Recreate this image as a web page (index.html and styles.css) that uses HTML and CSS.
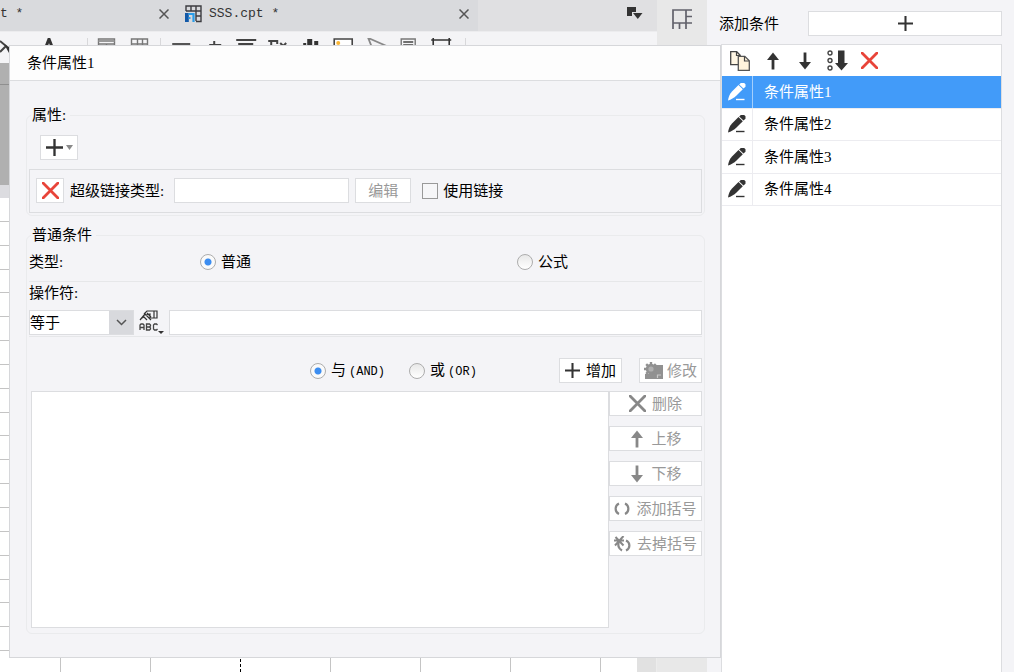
FILE: index.html
```html
<!DOCTYPE html>
<html lang="zh-CN">
<head>
<meta charset="utf-8">
<title>条件属性</title>
<link rel="stylesheet" href="styles.css">
</head>
<body>
<svg class="defs" aria-hidden="true">
  <symbol id="i-plus" viewBox="0 0 16 16"><path d="M8 0v16M0 8h16" stroke="currentColor" stroke-width="2.2"/></symbol>
  <symbol id="i-x" viewBox="0 0 16 16"><path d="M1 1l14 14M15 1L1 15" stroke="currentColor" stroke-width="2.6" stroke-linecap="round"/></symbol>
  <symbol id="i-close" viewBox="0 0 10 10"><path d="M0.5 0.5l9 9M9.5 0.5l-9 9" stroke="currentColor" stroke-width="1.5"/></symbol>
  <symbol id="i-up" viewBox="0 0 16 18"><path d="M6.600 6h2.800v11.5H6.600z" fill="currentColor"/><path d="M8 0.5L14 8H2z" fill="currentColor"/></symbol>
  <symbol id="i-down" viewBox="0 0 16 18"><path d="M6.600 0.5h2.800V12H6.600z" fill="currentColor"/><path d="M8 17.5L14 10H2z" fill="currentColor"/></symbol>
  <symbol id="i-pen" viewBox="0 0 18 18"><path d="M0 17.500C.5 14 1.500 11 4 8.500L10.500 2l4.300 4.200L8.500 12.500C6 15 3 16.500 0 17.500z" fill="currentColor"/><path d="M11.200 1.400L12.800 0h3.400l1.300 1.300v2.400l-2 1.900z" fill="currentColor"/><path d="M8 16.500h8.500" stroke="currentColor" stroke-width="1.400"/></symbol>
</svg>
<div class="app">
  <main class="workspace">
    <div class="editor">
      <nav class="tabs">
        <div class="tab"><span class="tab-name">t *</span><button class="plain tab-close" aria-label="关闭"><svg width="10" height="10"><use href="#i-close"/></svg></button></div>
        <div class="tab tab-wide">
          <svg width="17" height="18" viewBox="0 0 17 18"><path d="M1 6V1h15v15.500h-5M1 6h15M6 1v5M11 1v15M11 11h5" fill="none" stroke="#3c3c40" stroke-width="1.400"/><path d="M0 8h3.800v9H0z" fill="#1259a8"/><path d="M3.500 9h5v8M3.500 13h2" fill="none" stroke="#2a9de8" stroke-width="2.200"/></svg>
          <span class="tab-name">SSS.cpt *</span><button class="plain tab-close" aria-label="关闭"><svg width="10" height="10"><use href="#i-close"/></svg></button>
        </div>
        <button class="plain tab-menu" aria-label="标签列表"><svg width="16" height="13" viewBox="0 0 16 13"><path d="M0 0h9v5H5v4H0z" fill="#333"/><path d="M6 6h9.500l-4.700 6z" fill="#333"/></svg></button>
      </nav>
      <div class="toolbar">
        <svg class="bucket" width="10" height="16" viewBox="0 0 10 16"><path d="M0 3l6 5-6 6" fill="none" stroke="#444" stroke-width="2"/><path d="M4 6l5 3v6z" fill="#333"/></svg>
        <svg class="letter" width="14" height="16" viewBox="0 0 14 16"><path d="M2 14L7 1l5 13M4 9h6" fill="none" stroke="#333" stroke-width="3"/></svg>
        <span class="sep"></span>
        <div class="tools tools-small">
          <svg width="18" height="16" viewBox="0 0 18 16"><path d="M1 1h16v14H1zM1 6h16M9 6v9" fill="none" stroke="#777" stroke-width="1.400"/><path d="M1 2h16v2H1z" fill="#999"/></svg>
          <svg width="18" height="16" viewBox="0 0 18 16"><path d="M1 1h16v14H1zM1 6h16M7 1v14M12 1v14" fill="none" stroke="#777" stroke-width="1.400"/></svg>
        </div>
        <span class="sep"></span>
        <div class="tools">
          <svg width="18" height="16" viewBox="0 0 18 16"><path d="M0 6h18" stroke="#555" stroke-width="2"/></svg>
          <svg width="18" height="16" viewBox="0 0 18 16"><path d="M10 3v10M5 7h12" stroke="#444" stroke-width="2"/></svg>
          <svg width="20" height="16" viewBox="0 0 20 16"><path d="M0 2h20M2 6h15M0 10h20" stroke="#444" stroke-width="2"/></svg>
          <svg width="20" height="16" viewBox="0 0 20 16"><path d="M3 14V3M0 3h9v3M12 5l6 6M18 5l-6 6" fill="none" stroke="#444" stroke-width="2"/></svg>
          <svg width="16" height="16" viewBox="0 0 16 16"><path d="M4 1h5v14H4zM11 3h4v12h-4zM0 5h3v10H0z" fill="#333"/></svg>
          <svg width="20" height="16" viewBox="0 0 20 16"><path d="M1 1h18v14H1z" fill="#fff" stroke="#444" stroke-width="1.600"/><circle cx="5" cy="5" r="2" fill="#fbb634"/></svg>
          <svg width="18" height="16" viewBox="0 0 18 16"><path d="M1 0l16 7-8 2-2 6z" fill="none" stroke="#888" stroke-width="1.800"/></svg>
          <svg width="16" height="16" viewBox="0 0 16 16"><path d="M1 1h14v14H1z" fill="none" stroke="#777" stroke-width="1.400"/><path d="M3 4h10M3 7h10" stroke="#444" stroke-width="1.600"/></svg>
          <svg width="20" height="16" viewBox="0 0 20 16"><path d="M0 2h20M2 0v16M18 0v16" stroke="#333" stroke-width="1.600"/></svg>
        </div>
        <span class="sep"></span>
      </div>
      <div class="sheet-head"></div>
      <div class="sheet-band"></div>
      <div class="sheet">
        <div class="sheet-grid">
          <div class="rows"><i></i><i></i><i></i><i></i><i></i><i></i><i></i><i></i><i></i><i></i><i></i><i></i><i></i><i></i><i></i><i></i><i></i><i></i><i></i></div>
          <div class="cols"><i></i><i></i><i class="page-break"></i><i></i><i></i><i></i><i></i></div>
        </div>
        <div class="scroll"></div>
      </div>
    </div>
    <aside class="rail"><button class="plain" aria-label="单元格属性"><svg width="20" height="20" viewBox="0 0 20 20"><path d="M1 20V1h19M1 14h19M14 1v19M14 7.500h6M7.500 14v6" fill="none" stroke="#62626b" stroke-width="1.700"/></svg></button></aside>

    <section class="dialog">
      <h1 class="dialog-title">条件属性1</h1>
      <div class="dialog-body">
        <fieldset class="group">
          <legend>属性:</legend>
          <button class="btn add-attr" aria-label="添加属性"><svg width="17" height="17"><use href="#i-plus"/></svg><svg width="7" height="5" viewBox="0 0 7 5"><path d="M0 0h7L3.500 5z" fill="#8a8a8a"/></svg></button>
          <div class="link-row">
            <button class="btn remove" aria-label="删除属性"><svg width="17" height="17"><use href="#i-x"/></svg></button>
            <label for="link-type">超级链接类型:</label>
            <input class="field link-type" id="link-type" type="text">
            <button class="btn edit" disabled>编辑</button>
            <label class="choice"><input class="check" type="checkbox">使用链接</label>
          </div>
        </fieldset>

        <fieldset class="group conditions">
          <legend>普通条件</legend>
          <div class="type-row">
            <span class="type-label">类型:</span>
            <label class="choice"><input class="radio" type="radio" name="kind" checked>普通</label>
            <label class="choice"><input class="radio" type="radio" name="kind">公式</label>
          </div>
          <label class="op-label" for="operator">操作符:</label>
          <div class="op-row">
            <div class="combo">
              <select id="operator"><option>等于</option></select>
              <span class="combo-arrow"><svg width="11" height="7" viewBox="0 0 11 7"><path d="M1 1l4.500 4.500L10 1" fill="none" stroke="#555" stroke-width="1.500"/></svg></span>
            </div>
            <button class="plain value-type" aria-label="字符串"><svg width="25" height="25" viewBox="0 0 25 25"><path d="M11.500 1H18v7h-6.500M15 1v7M11.500 1H8L5 4M1 10l5-6 6 6M3 8l2-1 3 3M6 5l5-1v4M8 3l4 4" fill="none" stroke="#333" stroke-width="1.200"/><path d="M1 20v-5l1-1h2l1 1v5M1 17.500h4M7.500 14v6h3l1-1v-1l-1-1 1-1v-1l-1-1zM7.500 17h3M18.500 15l-1-1h-2l-1 1v4l1 1h2l1-1" fill="none" stroke="#444" stroke-width="1.300"/><path d="M19 21h6l-3 3z" fill="#333"/></svg></button>
            <input class="field value" type="text" aria-label="值">
          </div>
          <div class="logic-row">
            <label class="choice"><input class="radio" type="radio" name="logic" checked><span>与<span class="latin">(AND)</span></span></label>
            <label class="choice"><input class="radio" type="radio" name="logic"><span>或<span class="latin">(OR)</span></span></label>
            <div class="logic-actions">
              <button class="btn action"><svg width="15" height="15"><use href="#i-plus"/></svg>增加</button>
              <button class="btn action" disabled><svg width="19" height="18" viewBox="0 0 19 18"><path d="M9 3h10v14H1v-5h8z" fill="#919191"/><circle cx="7" cy="7" r="5.200" fill="#919191"/><path d="M7 0v14M0 7h14M2.200 2.200l9.600 9.600M11.800 2.200l-9.600 9.600" stroke="#919191" stroke-width="2.400"/><circle cx="7" cy="7" r="2.600" fill="#b0b0b0"/><path d="M13.500 16v-3h3.500" fill="none" stroke="#c8c8c8" stroke-width="1.200"/></svg>修改</button>
            </div>
          </div>
          <div class="list-area">
            <div class="cond-list" role="listbox" aria-label="条件列表" tabindex="0"></div>
            <div class="cond-actions">
              <button class="btn" disabled><svg width="17" height="17"><use href="#i-x"/></svg>删除</button>
              <button class="btn" disabled><svg width="16" height="18"><use href="#i-up"/></svg>上移</button>
              <button class="btn" disabled><svg width="16" height="18"><use href="#i-down"/></svg>下移</button>
              <button class="btn" disabled><svg width="16" height="14" viewBox="0 0 16 14"><path d="M5 1.500C.5 3.500.5 10 5 12M11 1.500c4.500 2 4.500 8.500 0 10.500" fill="none" stroke="currentColor" stroke-width="2.200"/></svg>添加括号</button>
              <button class="btn" disabled><svg width="17" height="16" viewBox="0 0 17 16"><path d="M5 5C3.500 9 4.500 12.500 8 14.500M12 4.500c4.500 2 4.500 8 0 10" fill="none" stroke="currentColor" stroke-width="2.200"/><path d="M1.500 1l8 8.500M9.500 0L1 9.500M0 4.500h10" stroke="currentColor" stroke-width="2"/></svg>去掉括号</button>
            </div>
          </div>
        </fieldset>
      </div>
    </section>
  </main>

  <aside class="panel">
    <div class="panel-head"><span>添加条件</span><button class="btn panel-add" aria-label="添加条件"><svg width="15" height="15"><use href="#i-plus"/></svg></button></div>
    <div class="panel-box">
      <div class="panel-tools">
        <button class="plain" aria-label="复制"><svg width="20" height="20" viewBox="0 0 20 20"><path d="M.7.700h6l3.500 3.500v9.500H.700z" fill="#fff6e3" stroke="#444" stroke-width="1.300"/><path d="M8.300 5.300h6.500l4.500 4.500v9.500h-11z" fill="#fff3dc" stroke="#555" stroke-width="1.300"/><path d="M6.500 1v3.500h3.500M14.500 5.500V10H19" fill="none" stroke="#444" stroke-width="1.200"/></svg></button>
        <button class="plain" aria-label="上移"><svg width="16" height="18"><use href="#i-up"/></svg></button>
        <button class="plain" aria-label="下移"><svg width="16" height="18"><use href="#i-down"/></svg></button>
        <button class="plain" aria-label="排序"><svg width="21" height="21" viewBox="0 0 21 21"><g fill="none" stroke="#444" stroke-width="1.400"><circle cx="3" cy="3" r="2"/><circle cx="3" cy="10.500" r="2"/><circle cx="3" cy="18" r="2"/></g><path d="M11 .5h6.500V13H21l-6.500 7.500L8 13h3z" fill="#333"/></svg></button>
        <button class="plain danger" aria-label="删除"><svg width="17" height="17"><use href="#i-x"/></svg></button>
      </div>
      <ul class="items">
        <li class="selected"><button class="plain pen" aria-label="编辑"><svg width="18" height="18"><use href="#i-pen"/></svg></button><span>条件属性1</span></li>
        <li><button class="plain pen" aria-label="编辑"><svg width="18" height="18"><use href="#i-pen"/></svg></button><span>条件属性2</span></li>
        <li><button class="plain pen" aria-label="编辑"><svg width="18" height="18"><use href="#i-pen"/></svg></button><span>条件属性3</span></li>
        <li><button class="plain pen" aria-label="编辑"><svg width="18" height="18"><use href="#i-pen"/></svg></button><span>条件属性4</span></li>
      </ul>
    </div>
  </aside>
</div>
</body>
</html>
```

FILE: styles.css
```css
* { box-sizing: border-box; }

body {
  margin: 0;
  background: #f4f4f7;
  color: #000;
  font: 15px/20px "Liberation Serif", "Noto Sans CJK SC", sans-serif;
}

svg { display: block; flex: none; }
.defs { position: absolute; width: 0; height: 0; }

button, input, select { font: inherit; color: inherit; margin: 0; }
.plain { display: flex; align-items: center; justify-content: center; padding: 0; border: 0; background: none; color: #333; }

.btn {
  display: flex;
  align-items: center;
  justify-content: center;
  gap: 6px;
  height: 25px;
  padding: 0;
  border: 1px solid #dcdde0;
  background: #fff;
  color: #000;
  white-space: nowrap;
}
.btn svg { color: #333; }
.btn:disabled { color: #999; }
.btn:disabled svg { color: #888; }

.field { height: 25px; min-width: 0; padding: 0 4px; border: 1px solid #dcdde0; background: #fff; }

.app { display: flex; min-height: 100vh; }
.workspace { position: relative; display: flex; flex: 1; padding-right: 12px; }
.editor { display: flex; flex: 1; flex-direction: column; min-width: 0; background: #fff; }

/* document tabs */
.tabs { display: flex; height: 32px; background: #e0e0e2; border-bottom: 1px solid #ececee; }
.tab { display: flex; align-items: center; width: 178px; padding: 0 9px 3px 0; background: #d9dadd; }
.tab-wide { width: 300px; gap: 7px; padding-left: 7px; }
.tab-name { font: 13px/20px "Liberation Mono", monospace; color: #333; white-space: pre; }
.tab-close { margin-left: auto; color: #555; }
.tab-menu { margin: 0 14px 5px auto; }

/* toolbar */
.toolbar { display: flex; align-items: flex-start; height: 31px; padding-top: 6px; background: #f4f4f6; }
.letter { margin: 0 31px 0 32px; }
.sep { width: 1px; height: 20px; background: #d8d8da; }
.tools { display: flex; width: 292px; margin: 0 8px 0 4px; }
.tools-small { width: 66px; margin: 0 4px 0 2px; }
.tools svg { flex: 1; }

/* spreadsheet */
.sheet-head { height: 22px; background: #b0b0b0; border-bottom: 1px solid #8f8f8f; }
.sheet-band { height: 113px; background: #b0b0b0; border-bottom: 13px solid #dcdce0; }
.sheet { display: flex; flex: 1; overflow: hidden; }
.sheet-grid { display: grid; flex: 1; }
.rows, .cols { grid-area: 1 / 1; display: flex; }
.rows { flex-direction: column; padding-bottom: 21px; }
.rows i { flex: 1; border-bottom: 1px solid #c4c4c4; }
.cols i { width: 90px; border-right: 1px solid #c4c4c4; }
.cols i:first-child { width: 61px; }
.cols .page-break { border-right: 1px dashed #000; }
.scroll { width: 20px; background: #e1e1e1; border-right: 1px solid #ececec; }

.rail { width: 50px; padding-top: 9px; background: #e8e8e8; }
.rail .plain { width: 100%; }

/* floating condition editor */
.dialog {
  position: absolute;
  inset: 45px -2px 14px 9px;
  display: flex;
  flex-direction: column;
  border: 1px solid #d6d7da;
  background: #f4f4f7;
}
.dialog-title { margin: 0; padding: 7px 17px; font-size: 15px; font-weight: 400; background: #fdfdfd; border-bottom: 1px solid #dcdde0; }
.dialog-body { display: flex; flex: 1; flex-direction: column; gap: 9px; padding: 24px 15px 23px 16px; }

.group { margin: 0; padding: 10px 2px 2px; min-width: 0; border: 1px solid #eaebed; border-radius: 6px; }
.group legend { margin-left: 2px; padding: 0 4px 0 1px; }
.add-attr { width: 38px; gap: 3px; margin: 0 0 9px 11px; }
.link-row { display: flex; align-items: center; gap: 6px; padding: 8px 6px 9px; border: 1px solid #dcdde0; }
.link-row .choice { margin-left: 5px; }
.btn.remove { width: 28px; }
.btn.remove svg, .panel .danger { color: #e8443a; }
.link-type { width: 175px; margin-left: 4px; }
.edit { width: 56px; }

.choice { display: flex; align-items: center; gap: 5px; white-space: nowrap; }
.check { appearance: none; width: 16px; height: 16px; border: 1px solid #999; background: #f6f6f8; }
.radio { appearance: none; width: 16px; height: 16px; border: 1px solid #adadad; border-radius: 50%; background: linear-gradient(#e8e8e8, #fff); }
.radio:checked { background: radial-gradient(circle, #3c8df0 3px, #fafafa 4px); }

.conditions { display: flex; flex: 1; flex-direction: column; padding-top: 7px; }
.type-row { display: grid; grid-template-columns: 171px 317px auto; align-items: center; padding-bottom: 9px; border-bottom: 1px solid #e6e7e9; }
.op-label { margin: 1px 0 7px; }
.op-row { display: flex; padding-bottom: 1px; border-bottom: 1px solid #e6e7e9; }
.combo { display: grid; width: 105px; height: 25px; border: 1px solid #dcdde0; background: #fff; }
.combo select { grid-area: 1 / 1; appearance: none; padding: 0; border: 0; background: none; }
.combo-arrow { grid-area: 1 / 1; display: flex; align-items: center; justify-content: center; justify-self: end; width: 24px; background: #d8d9dd; pointer-events: none; }
.value-type { width: 35px; }
.value { flex: 1; }

.logic-row { display: flex; align-items: center; gap: 24px; padding: 21px 0 8px 281px; }
.latin { margin-left: 3px; font: 12px/20px "Liberation Mono", monospace; }
.logic-actions { display: flex; gap: 17px; margin-left: auto; }
.action { width: 63px; }
.action:disabled { gap: 4px; }

.list-area { display: flex; flex: 1; padding: 0 0 3px 2px; }
.cond-list { flex: 1; border: 1px solid #dcdde0; background: #fff; }
.cond-actions { display: flex; flex-direction: column; gap: 10px; width: 93px; }

/* condition list panel */
.panel { display: flex; flex-direction: column; width: 295px; padding: 11px 12px 0 0; }
.panel-head { display: flex; align-items: center; gap: 29px; margin-bottom: 8px; }
.panel-add { flex: 1; }
.panel-box { flex: 1; margin-left: 2px; border: 1px solid #dcdde0; border-bottom: 0; background: #fff; }
.panel-tools { display: flex; width: 162px; height: 31px; margin-left: 2px; }
.panel-tools .plain { flex: 1; }
.items { display: flex; flex-direction: column; height: 130px; margin: 0; padding: 0; list-style: none; }
.items li { display: flex; flex: 1; align-items: stretch; border-bottom: 1px solid #ececf0; }
.items li span { align-self: center; padding-left: 11px; }
.pen { width: 31px; border-right: 1px solid #ececf0; }
.items .selected { background: #429bf9; color: #fff; }
.selected .pen { color: #fff; border-color: #a4cffc; }
```
